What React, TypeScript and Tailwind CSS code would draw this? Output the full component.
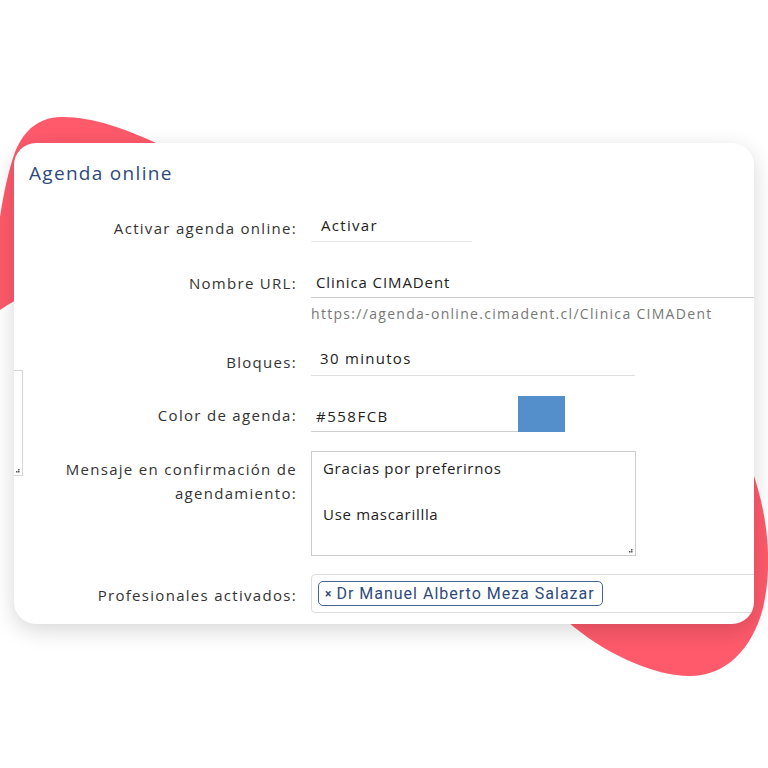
import React from 'react';

const font = { fontFamily: '"Open Sans", "Noto Sans", sans-serif' };

function Blobs() {
  return (
    <svg className="absolute inset-0" width="768" height="768" viewBox="0 0 768 768">
      <path
        d="M -14 320 C -4 250, 0 195, 15 152 C 25 128, 40 118, 60 117 C 90 116, 125 128, 165 147 L 165 250 C 100 265, 30 285, -14 320 Z"
        fill="#fe5a6b"
      />
      <path
        d="M 752 470 C 766 510, 774 560, 763 608 C 752 650, 725 676, 690 676 C 650 676, 600 650, 568 622 L 560 470 Z"
        fill="#fe5a6b"
      />
    </svg>
  );
}

function Label({ children, className = '' }: { children: React.ReactNode; className?: string }) {
  return (
    <div className={`w-[283px] shrink-0 text-right text-[15px] tracking-[1.3px] text-[#333] ${className}`}>
      {children}
    </div>
  );
}

function ResizeGrip() {
  return (
    <svg className="absolute bottom-[2px] right-[2px]" width="5" height="5" viewBox="0 0 5 5">
      <rect x="3" y="1" width="1.5" height="1.5" fill="#555" />
      <rect x="1" y="3" width="1.5" height="1.5" fill="#555" />
      <rect x="3" y="3" width="1.5" height="1.5" fill="#555" />
    </svg>
  );
}

export default function App() {
  return (
    <div className="relative h-[768px] w-[768px] overflow-hidden bg-white" style={font}>
      <Blobs />
      <div className="relative ml-[14px] mt-[143px] h-[481px] w-[740px] overflow-hidden rounded-[22px] bg-white shadow-[0_6px_22px_rgba(0,0,0,0.16)]">
        {/* clipped box at the left edge */}
        <div className="absolute left-[-2px] top-[227px] h-[106px] w-[11px] border border-[#d6d6d6]">
          <ResizeGrip />
        </div>

        <div className="pt-[18px]">
          <h2 className="pl-[15px] text-[19px] leading-[24px] tracking-[1.3px] text-[#2f4a7c]">Agenda online</h2>

          <div className="mt-[27px] flex items-center">
            <Label className="pt-[2px]">Activar agenda online:</Label>
            <div className="ml-[14px] flex h-[30px] w-[161px] items-center border-b border-[#e6e6e6] pb-[2px] pl-[10px] text-[15px] tracking-[1.3px] text-[#222]">
              Activar
            </div>
          </div>

          <div className="mt-[26px] flex items-center">
            <Label>Nombre URL:</Label>
            <div className="ml-[14px] flex h-[30px] min-w-[460px] flex-1 items-center border-b border-[#cfcfcf] pl-[5px] text-[15px] tracking-[0.9px] text-[#222]">
              Clinica CIMADent
            </div>
          </div>
          <div className="ml-[297px] mt-[6px] text-[14px] leading-[20px] tracking-[1.3px] text-[#777]">
            https://agenda-online.cimadent.cl/Clinica CIMADent
          </div>

          <div className="mt-[21px] flex items-center">
            <Label className="pt-[4px]">Bloques:</Label>
            <div className="ml-[14px] flex h-[31px] w-[324px] items-center border-b border-[#dedede] pb-[3px] pl-[9px] text-[15px] tracking-[1.3px] text-[#222]">
              30 minutos
            </div>
          </div>

          <div className="mt-[20px] flex items-end">
            <Label className="pb-[6px]">Color de agenda:</Label>
            <div className="ml-[14px] flex h-[30px] w-[207px] items-center border-b border-[#cfcfcf] pl-[5px] text-[15px] tracking-[1.5px] text-[#222]">
              #558FCB
            </div>
            <div className="h-[36px] w-[47px] bg-[#558FCB]" />
          </div>

          <div className="mt-[19px] flex items-start">
            <Label className="pt-[6px] leading-[24px]">
              Mensaje en confirmación de
              <br />
              agendamiento:
            </Label>
            <div className="relative ml-[14px] h-[105px] w-[325px] border border-[#cccccc] pl-[11px] pt-[5px] text-[15px] leading-[23px] tracking-[0.7px] text-[#222]">
              <div>Gracias por preferirnos</div>
              <div>&nbsp;</div>
              <div>Use mascarillla</div>
              <ResizeGrip />
            </div>
          </div>

          <div className="mt-[18px] flex items-center">
            <Label className="pt-[3px]">Profesionales activados:</Label>
            <div className="ml-[14px] flex h-[39px] min-w-[460px] flex-1 items-center rounded-[4px] border border-[#dcdcdc] pl-[6px]">
              <div
                className="flex h-[25px] items-center gap-[4px] rounded-[5px] border-[1.5px] border-[#4a6290] pl-[6px] pr-[7px] text-[16px] tracking-[1px] text-[#2f4a7c]"
                style={{ fontFamily: 'Roboto, "Liberation Sans", sans-serif' }}
              >
                <span className="text-[12px] font-bold">×</span>
                <span>Dr Manuel Alberto Meza Salazar</span>
              </div>
            </div>
          </div>
        </div>
      </div>
    </div>
  );
}
